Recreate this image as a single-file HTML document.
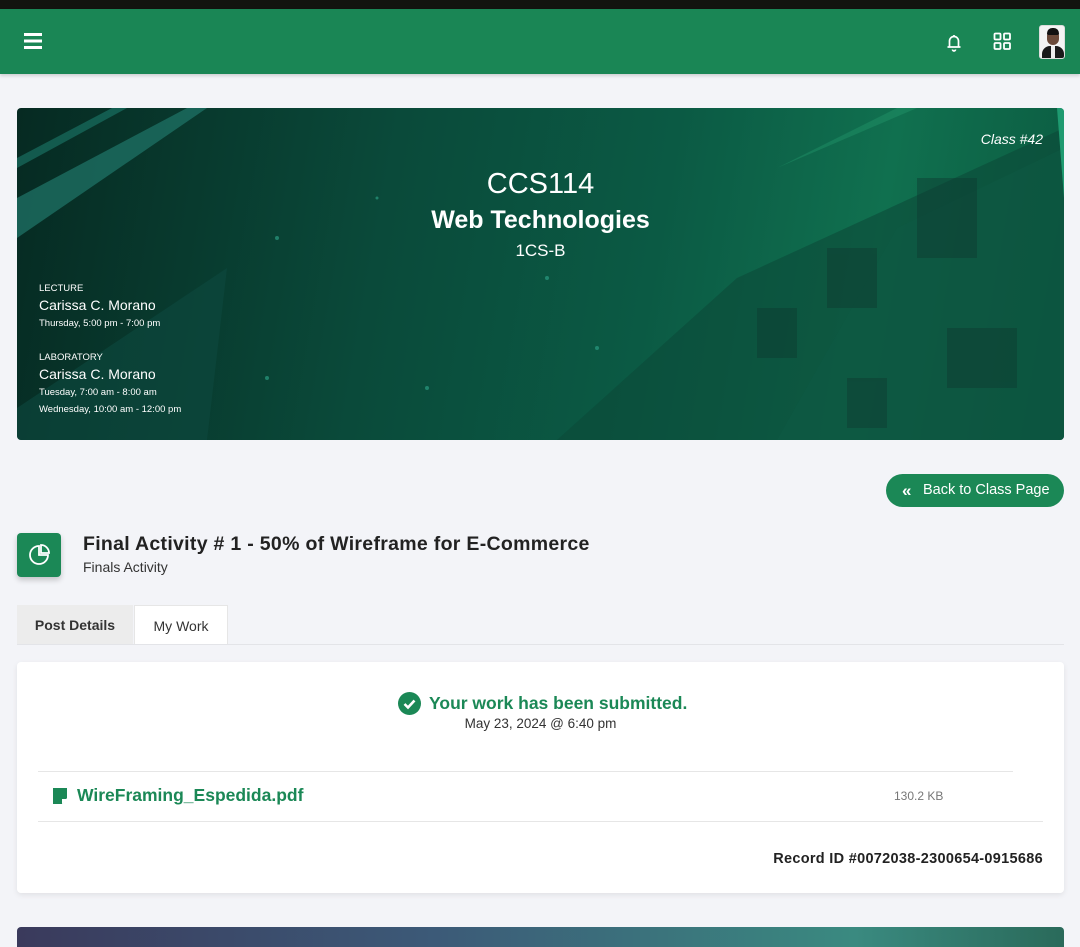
<!DOCTYPE html>
<html><head><meta charset="utf-8"><style>
*{margin:0;padding:0;box-sizing:border-box}
body{width:1080px;height:945px;overflow:hidden;background:#f3f4f8;font-family:"Liberation Sans",sans-serif;position:relative;color:#222}
.abs{position:absolute}
</style></head><body>
<div class="abs" style="left:0;top:0;width:1080px;height:9px;background:#12140f"></div>
<div class="abs" style="left:0;top:9px;width:1080px;height:65px;background:#1a8655;box-shadow:0 2px 3px rgba(0,0,0,.15)"></div>
<svg class="abs" style="left:24px;top:32px" width="18" height="18"><rect y="1" width="18" height="3" fill="#fff"/><rect y="7.5" width="18" height="3" fill="#fff"/><rect y="14" width="18" height="3" fill="#fff"/></svg>
<svg class="abs" style="left:944px;top:32px" width="20" height="20" fill="none" stroke="#fff" stroke-width="1.7"><path d="M3.5 15h13M5.5 15V9a4.5 4.5 0 0 1 9 0v6M10 3v1.5M8.5 17.5a1.5 1.5 0 0 0 3 0"/></svg>
<svg class="abs" style="left:993px;top:32px" width="19" height="19" fill="none" stroke="#fff" stroke-width="1.8"><rect x="1.5" y="1.5" width="6" height="6" rx="1"/><rect x="11" y="1.5" width="6" height="6" rx="1"/><rect x="1.5" y="11" width="6" height="6" rx="1"/><rect x="11" y="11" width="6" height="6" rx="1"/></svg>
<div class="abs" style="left:1039px;top:25px;width:26px;height:34px;border-radius:3px;background:#f4f4f4;border:1px solid #ddd;overflow:hidden">
<div class="abs" style="left:7px;top:4px;width:12px;height:15px;border-radius:6px;background:#6b4a3a"></div>
<div class="abs" style="left:7px;top:2px;width:12px;height:7px;border-radius:6px 6px 2px 2px;background:#111"></div>
<div class="abs" style="left:2px;top:20px;width:22px;height:14px;border-radius:8px 8px 0 0;background:#1a1a1a"></div>
<div class="abs" style="left:11px;top:20px;width:4px;height:12px;background:#eee"></div>
</div>
<div class="abs" style="left:17px;top:108px;width:1047px;height:332px;border-radius:4px;overflow:hidden;background:linear-gradient(100deg,#062a22 0%,#0a4a3a 35%,#0b5a44 60%,#10704f 80%,#0b5a40 100%)">
<svg class="abs" style="left:0;top:0" width="1047" height="332">
<polygon points="0,90 170,0 190,0 0,130" fill="#1d6e62" opacity=".8"/>
<polygon points="0,50 95,0 110,0 0,60" fill="#1d7a6a" opacity=".6"/>
<polygon points="0,300 210,160 190,332 0,332" fill="#0d4a40" opacity=".6"/>
<polygon points="540,332 720,170 1047,20 1047,332" fill="#0b4a38" opacity=".6"/>
<polygon points="760,332 880,120 1047,40 1047,332" fill="#0e5a44" opacity=".5"/>
<polygon points="1040,0 1047,0 1047,90" fill="#1e9a70"/>
<g fill="#0e3a30" opacity=".45"><rect x="740" y="200" width="40" height="50"/><rect x="810" y="140" width="50" height="60"/><rect x="900" y="70" width="60" height="80"/><rect x="930" y="220" width="70" height="60"/><rect x="830" y="270" width="40" height="50"/></g>
<polygon points="760,60 880,0 900,0" fill="#2aa878" opacity=".3"/>
<g fill="#2a9a80" opacity=".7"><circle cx="260" cy="130" r="2"/><circle cx="410" cy="280" r="2"/><circle cx="530" cy="170" r="2"/><circle cx="360" cy="90" r="1.5"/><circle cx="580" cy="240" r="2"/><circle cx="250" cy="270" r="2"/></g>
</svg>
<div class="abs" style="left:0;width:1047px;top:60px;text-align:center;color:#fff;font-size:29px">CCS114</div>
<div class="abs" style="left:0;width:1047px;top:98px;text-align:center;color:#fff;font-size:25px;font-weight:bold">Web Technologies</div>
<div class="abs" style="left:0;width:1047px;top:133px;text-align:center;color:#fff;font-size:17px">1CS-B</div>
<div class="abs" style="right:21px;top:23px;color:#fff;font-size:14px;font-style:italic">Class #42</div>
<div class="abs" style="left:22px;top:175px;color:#fff;font-size:9.5px">LECTURE</div>
<div class="abs" style="left:22px;top:189px;color:#fff;font-size:14px">Carissa C. Morano</div>
<div class="abs" style="left:22px;top:210px;color:#fff;font-size:9.5px">Thursday, 5:00 pm - 7:00 pm</div>
<div class="abs" style="left:22px;top:244px;color:#fff;font-size:9.5px">LABORATORY</div>
<div class="abs" style="left:22px;top:258px;color:#fff;font-size:14px">Carissa C. Morano</div>
<div class="abs" style="left:22px;top:279px;color:#fff;font-size:9.5px">Tuesday, 7:00 am - 8:00 am</div>
<div class="abs" style="left:22px;top:296px;color:#fff;font-size:9.5px">Wednesday, 10:00 am - 12:00 pm</div>
</div>
<div class="abs" style="left:886px;top:474px;width:178px;height:33px;border-radius:17px;background:#1b8856;color:#fff;font-size:14.5px;line-height:33px;padding-left:37px">Back to Class Page</div>
<div class="abs" style="left:902px;top:481px;color:#fff;font-size:17px;font-weight:bold">«</div>
<div class="abs" style="left:17px;top:533px;width:44px;height:44px;border-radius:4px;background:#1b8856;box-shadow:0 3px 6px rgba(0,0,0,.2)"></div>
<svg class="abs" style="left:27px;top:543px" width="24" height="24" fill="none" stroke="#fff" stroke-width="1.8"><path d="M12 3a9 9 0 1 0 9 9H12z"/><path d="M14 2a8 8 0 0 1 8 8h-8z"/></svg>
<div class="abs" style="left:83px;top:533px;font-size:19.5px;font-weight:bold;color:#222;letter-spacing:.3px">Final Activity # 1 - 50% of Wireframe for E-Commerce</div>
<div class="abs" style="left:83px;top:559px;font-size:14px;color:#333">Finals Activity</div>
<div class="abs" style="left:17px;top:605px;width:116px;height:40px;background:#ececec;font-size:14px;font-weight:bold;color:#333;line-height:40px;text-align:center">Post Details</div>
<div class="abs" style="left:134px;top:605px;width:94px;height:40px;background:#fff;border:1px solid #e6e6e6;border-bottom:none;font-size:14px;color:#333;line-height:40px;text-align:center">My Work</div>
<div class="abs" style="left:17px;top:644px;width:1047px;height:1px;background:#e3e4e8"></div>
<div class="abs" style="left:17px;top:662px;width:1047px;height:231px;background:#fff;border-radius:4px;box-shadow:0 2px 6px rgba(0,0,0,.08)">
<svg class="abs" style="left:381px;top:30px" width="23" height="23"><circle cx="11.5" cy="11.5" r="11.5" fill="#1b8856"/><path d="M6.5 12l3.5 3.5 6.5-7" stroke="#fff" stroke-width="2.6" fill="none"/></svg>
<div class="abs" style="left:412px;top:31px;font-size:17.5px;font-weight:bold;color:#1b8856">Your work has been submitted.</div>
<div class="abs" style="left:0;width:1047px;top:54px;text-align:center;font-size:13.5px;color:#333">May 23, 2024 @ 6:40 pm</div>
<div class="abs" style="left:21px;top:109px;width:975px;height:1px;background:#e6e6e6"></div>
<svg class="abs" style="left:36px;top:126px" width="14" height="16"><path d="M0 0h14v10l-5 6H0z" fill="#1b8856"/><path d="M9 16v-5h5" fill="#fff"/></svg>
<div class="abs" style="left:60px;top:123px;font-size:17.5px;color:#1b8856;font-weight:bold">WireFraming_Espedida.pdf</div>
<div class="abs" style="left:877px;top:127px;font-size:12px;color:#777">130.2 KB</div>
<div class="abs" style="left:21px;top:159px;width:1005px;height:1px;background:#e6e6e6"></div>
<div class="abs" style="right:21px;top:189px;font-size:14.5px;font-weight:bold;color:#222;letter-spacing:.3px">Record ID #0072038-2300654-0915686</div>
</div>
<div class="abs" style="left:17px;top:927px;width:1047px;height:20px;border-radius:4px 4px 0 0;background:linear-gradient(90deg,#3a3a5c,#3c5a78 40%,#3a8a80 80%,#2a6a5a)"></div>
</body></html>
